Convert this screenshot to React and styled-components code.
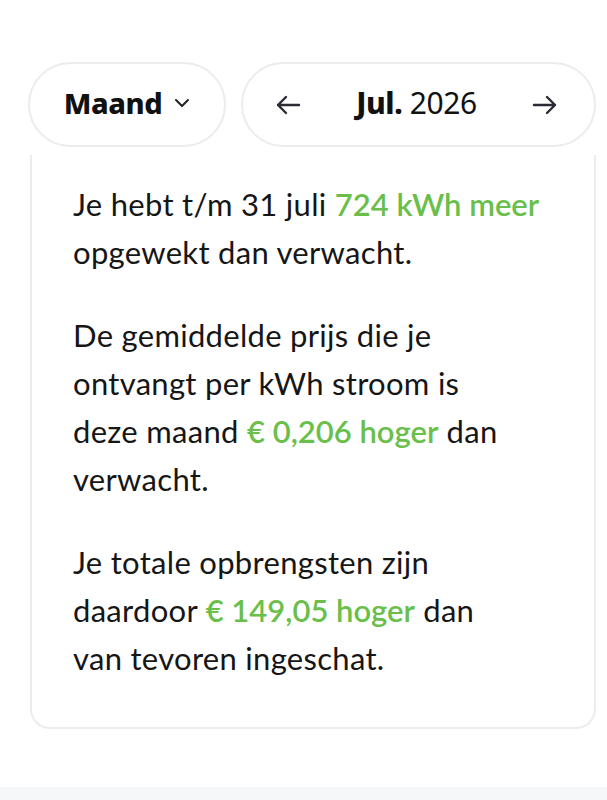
import React from "react";
import styled, { createGlobalStyle } from "styled-components";

const GlobalStyle = createGlobalStyle`
  html, body {
    margin: 0;
    padding: 0;
    background: #ffffff;
  }
  body {
    font-family: "Lato", "Open Sans", sans-serif;
    color: #161616;
  }
`;

const Page = styled.div`
  width: 607px;
  height: 800px;
  display: flex;
  flex-direction: column;
  background: #ffffff;
`;

const Toolbar = styled.div`
  display: flex;
  gap: 15px;
  padding: 62px 11px 0 28px;
`;

const Pill = styled.div`
  box-sizing: border-box;
  height: 85px;
  width: ${({ width }) => width}px;
  border: 2px solid #ececee;
  border-radius: 43px;
  display: flex;
  align-items: center;
  justify-content: ${({ spread }) => (spread ? "space-between" : "center")};
  padding: ${({ spread }) => (spread ? "0 36px 0 32px" : "0 0 4px")};
  gap: 12px;
`;

const PillLabel = styled.span`
  font-family: "Noto Sans", "Lato", sans-serif;
  font-size: 29px;
  font-weight: 800;
  color: #111111;
  letter-spacing: -0.4px;
`;

const MonthLabel = styled.div`
  font-family: "Noto Sans", "Lato", sans-serif;
  font-size: 30px;
  color: #111111;
  letter-spacing: -0.4px;
  padding-bottom: 4px;
  b {
    font-weight: 800;
  }
`;

const IconButton = styled.span`
  display: flex;
  align-items: center;
  color: #2b2b36;
`;

const Card = styled.div`
  margin: 8px 11px 0 30px;
  border: 2px solid #ececee;
  border-top: none;
  border-radius: 0 0 20px 20px;
  padding: 25px 10px 45px 41px;
`;

const Paragraph = styled.p`
  margin: 0 0 35px;
  font-size: 31px;
  line-height: 48px;
  color: #161616;
  letter-spacing: 0.3px;
  white-space: nowrap;
  &:last-child {
    margin-bottom: 0;
  }
`;

const Highlight = styled.span`
  color: #6abf4b;
  font-weight: 600;
  letter-spacing: 0;
`;

const BottomBar = styled.div`
  margin-top: auto;
  height: 13px;
  background: #f6f7f9;
`;

const Chevron = () => (
  <svg width="16" height="10" viewBox="0 0 16 10" fill="none">
    <path d="M2 2l6 6 6-6" stroke="#222" strokeWidth="2" strokeLinecap="round" strokeLinejoin="round" />
  </svg>
);

const Arrow = ({ dir }) => (
  <svg width="26" height="20" viewBox="0 0 26 20" fill="none" style={{ transform: dir === "left" ? "none" : "scaleX(-1)" }}>
    <path d="M24 10H3M11 2L3 10l8 8" stroke="currentColor" strokeWidth="2.4" strokeLinecap="round" strokeLinejoin="round" />
  </svg>
);

export default function App() {
  return (
    <>
      <GlobalStyle />
      <Page>
        <Toolbar>
          <Pill width={198}>
            <PillLabel>Maand</PillLabel>
            <Chevron />
          </Pill>
          <Pill width={355} spread>
            <IconButton>
              <Arrow dir="left" />
            </IconButton>
            <MonthLabel>
              <b>Jul.</b> 2026
            </MonthLabel>
            <IconButton>
              <Arrow dir="right" />
            </IconButton>
          </Pill>
        </Toolbar>
        <Card>
          <Paragraph>
            Je hebt t/m 31 juli <Highlight>724 kWh meer</Highlight>
            <br />
            opgewekt dan verwacht.
          </Paragraph>
          <Paragraph>
            De gemiddelde prijs die je
            <br />
            ontvangt per kWh stroom is
            <br />
            deze maand <Highlight>€ 0,206 hoger</Highlight> dan
            <br />
            verwacht.
          </Paragraph>
          <Paragraph>
            Je totale opbrengsten zijn
            <br />
            daardoor <Highlight>€ 149,05 hoger</Highlight> dan
            <br />
            van tevoren ingeschat.
          </Paragraph>
        </Card>
        <BottomBar />
      </Page>
    </>
  );
}
